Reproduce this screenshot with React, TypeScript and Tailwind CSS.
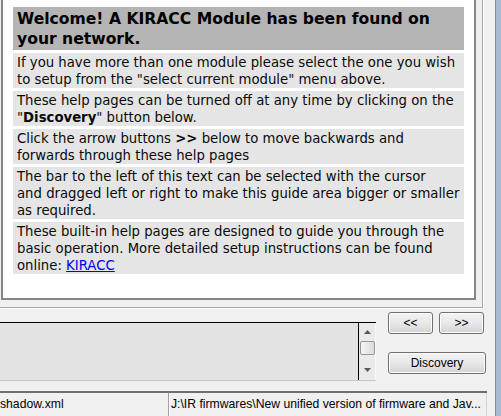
import React from "react";

const VERDANA = "font-['DejaVu_Sans',Verdana,sans-serif]";
const UI = "font-['Liberation_Sans',Arial,sans-serif]";

function WinButton({ label, className }: { label: string; className: string }) {
  return (
    <div
      className={`h-[22px] flex items-center justify-center rounded-[3px] border border-[#707070] bg-gradient-to-b from-[#f2f2f2] via-[#e8e8e8] to-[#d4d4d4] text-[12px] text-black shadow-[inset_0_0_0_1px_#fcfcfc] ${UI} ${className}`}
    >
      {label}
    </div>
  );
}

function HelpRow({ children }: { children: React.ReactNode }) {
  return <div className="bg-[#e5e5e5] px-[4px] pt-[1px] leading-[17px] whitespace-nowrap">{children}</div>;
}

export default function App() {
  return (
    <div className="w-[501px] h-[416px] overflow-hidden flex bg-[#f0f0f0]">
      <div className="w-[495px] flex flex-col">
        {/* help guide group */}
        <div className="w-[483px] h-[308px] border-r border-b border-[#a8a8a8] shadow-[1px_1px_0_#ffffff]">
          <div className="ml-[1px] w-[475px] h-[300px] bg-white border-l-2 border-r-2 border-b-2 border-[#868686] pt-[7px] px-[10px]">
            <div className={`flex flex-col gap-[3px] text-[13.25px] text-[#0a0a0a] ${VERDANA}`}>
              <div className="bg-[#b4b4b4] px-[4px] pt-[2px] pb-[1px] text-[15.6px] font-bold leading-[20px] whitespace-nowrap text-black">
                Welcome! A KIRACC Module has been found on
                <br />
                your network.
              </div>
              <HelpRow>
                If you have more than one module please select the one you wish
                <br />
                to setup from the "select current module" menu above.
              </HelpRow>
              <HelpRow>
                These help pages can be turned off at any time by clicking on the
                <br />
                "<b>Discovery</b>" button below.
              </HelpRow>
              <HelpRow>
                Click the arrow buttons <b>&gt;&gt;</b> below to move backwards and
                <br />
                forwards through these help pages
              </HelpRow>
              <HelpRow>
                The bar to the left of this text can be selected with the cursor
                <br />
                and dragged left or right to make this guide area bigger or smaller
                <br />
                as required.
              </HelpRow>
              <HelpRow>
                These built-in help pages are designed to guide you through the
                <br />
                basic operation. More detailed setup instructions can be found
                <br />
                online: <span className="text-[#0000ee] underline">KIRACC</span>
              </HelpRow>
            </div>
          </div>
        </div>

        {/* log area + buttons */}
        <div className="h-[83px] flex">
          <div className="mt-[14px] w-[376px] h-[59px] flex border-t border-black border-b border-b-[#c4c4c4] bg-[#e3e3e3]">
            <div className="flex-1 border-r border-black" />
            <div className="w-[17px] flex flex-col items-center bg-[#eaeaea] border-r border-[#f8f8f8]">
              <svg width="7" height="4" viewBox="0 0 7 4" className="mt-[7px]">
                <path d="M3.5 0 L7 4 L0 4 Z" fill="#5a5a5a" />
              </svg>
              <div className="mt-[7px] w-[15px] h-[14px] rounded-[2px] border border-[#979797] bg-gradient-to-r from-[#f4f4f4] to-[#dcdcdc]" />
              <svg width="7" height="4" viewBox="0 0 7 4" className="mt-[13px]">
                <path d="M0 0 L7 0 L3.5 4 Z" fill="#5a5a5a" />
              </svg>
            </div>
          </div>
          <div className="ml-[12px] flex flex-col">
            <div className="mt-[4px] flex gap-[6px]">
              <WinButton label="<<" className="w-[45px]" />
              <WinButton label=">>" className="w-[45px]" />
            </div>
            <WinButton label="Discovery" className="mt-[18px] w-[98px]" />
          </div>
        </div>

        {/* status bar */}
        <div className={`flex-1 w-[487px] border-t-2 border-[#6e6e6e] flex text-[12.2px] text-black ${UI}`}>
          <div className="w-[169px] border-r border-[#a0a0a0] shadow-[1px_0_0_#ffffff] flex items-center whitespace-nowrap overflow-hidden">
            shadow.xml
          </div>
          <div className="flex-1 pl-[2px] flex items-center whitespace-nowrap overflow-hidden border-r border-[#d6d6d6]">
            J:\IR firmwares\New unified version of firmware and Jav...
          </div>
        </div>
      </div>

      {/* window frame */}
      <div className="flex-1 border-l border-[#8090a8] bg-[#a9bbd3]" />
    </div>
  );
}
